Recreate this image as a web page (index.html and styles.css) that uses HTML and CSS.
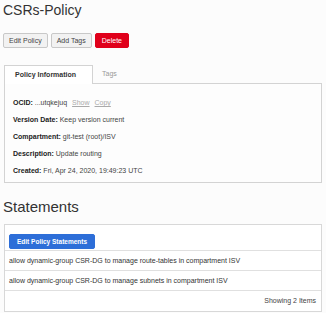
FILE: index.html
```html
<!DOCTYPE html>
<html lang="en">
<head>
    <meta charset="UTF-8">
    <meta name="viewport" content="width=device-width, initial-scale=1.0">
    <title>CSRs-Policy</title>
    <link rel="stylesheet" href="styles.css">
</head>
<body>
    <h1 class="page-title">CSRs-Policy</h1>
    <div class="actions">
        <button class="btn">Edit Policy</button>
        <button class="btn">Add Tags</button>
        <button class="btn btn-danger">Delete</button>
    </div>

    <div class="tabs">
        <div class="tab-bar">
            <div class="tab active">Policy Information</div>
            <div class="tab">Tags</div>
            <div class="tab-fill"></div>
        </div>
        <div class="tab-panel">
            <p class="info-row"><span class="label">OCID:</span> ...utqkejuq <a class="link">Show</a> <a class="link">Copy</a></p>
            <p class="info-row"><span class="label">Version Date:</span> Keep version current</p>
            <p class="info-row"><span class="label">Compartment:</span> git-test (root)/ISV</p>
            <p class="info-row"><span class="label">Description:</span> Update routing</p>
            <p class="info-row"><span class="label">Created:</span> Fri, Apr 24, 2020, 19:49:23 UTC</p>
        </div>
    </div>

    <h2 class="section-title">Statements</h2>
    <div class="table">
        <div class="table-toolbar">
            <button class="btn btn-primary">Edit Policy Statements</button>
        </div>
        <div class="table-row">allow dynamic-group CSR-DG to manage route-tables in compartment ISV</div>
        <div class="table-row">allow dynamic-group CSR-DG to manage subnets in compartment ISV</div>
        <div class="table-footer">Showing 2 Items</div>
    </div>
</body>
</html>
```

FILE: styles.css
```css
body {
    margin: 0;
    padding: 0 4px 0 4px;
    background-color: #fcfcfc;
    font-family: "Liberation Sans", Arial, sans-serif;
    color: #333;
}
.page-title {
    margin: 0;
    font-size: 14px;
    font-weight: normal;
    line-height: 20px;
    margin-left: -1px;
}
.actions {
    display: flex;
    gap: 3px;
    margin-top: 13px;
    margin-left: -1px;
}
.btn {
    font-family: inherit;
    font-size: 7px;
    height: 15px;
    padding: 0 5px;
    border: 1px solid #c8c8c8;
    border-radius: 2px;
    background: #f2f2f2;
    color: #444;
}
.btn-danger {
    background: #e0001b;
    border-color: #e0001b;
    color: #fff;
    padding: 0 6px;
}
.btn-primary {
    background: #2d6ed8;
    border-color: #2d6ed8;
    color: #fff;
    font-weight: bold;
    font-size: 6.5px;
    padding: 0 7px;
}
.tabs {
    margin-top: 17px;
}
.tab-bar {
    display: flex;
    height: 19px;
}
.tab {
    font-size: 7px;
    line-height: 18px;
    padding: 0 9px;
    color: #999;
    border-bottom: 1px solid #d3d3d3;
}
.tab.active {
    width: 67px;
    padding: 0 10px 1px 10px;
    font-weight: bold;
    color: #333;
    background: #fff;
    border: 1px solid #d3d3d3;
    border-bottom: none;
}
.tab-fill {
    flex: 1;
    border-bottom: 1px solid #d3d3d3;
}
.tab-panel {
    border: 1px solid #d3d3d3;
    border-top: none;
    background: #fdfdfd;
    padding: 10px 8px 4px 8px;
    height: 84px;
}
.info-row {
    margin: 0;
    font-size: 7px;
    line-height: 17px;
    color: #444;
}
.label {
    font-weight: bold;
    color: #222;
}
.link {
    color: #aaa;
    text-decoration: underline;
    margin-left: 3px;
}
.section-title {
    margin: 0;
    margin-top: 14px;
    margin-left: -1px;
    font-size: 15px;
    font-weight: normal;
    line-height: 20px;
}
.table {
    margin-top: 7px;
    border: 1px solid #d8d8d8;
    background: #fff;
}
.table-toolbar {
    padding: 5px 4px 5px 4px;
    height: 15px;
    border-bottom: 1px solid #e0e0e0;
}
.table-row {
    font-size: 7px;
    line-height: 19px;
    padding: 0 4px;
    border-bottom: 1px solid #e0e0e0;
    color: #333;
}
.table-footer {
    font-size: 7px;
    line-height: 20px;
    text-align: right;
    padding: 0 5px;
    color: #444;
}
```
